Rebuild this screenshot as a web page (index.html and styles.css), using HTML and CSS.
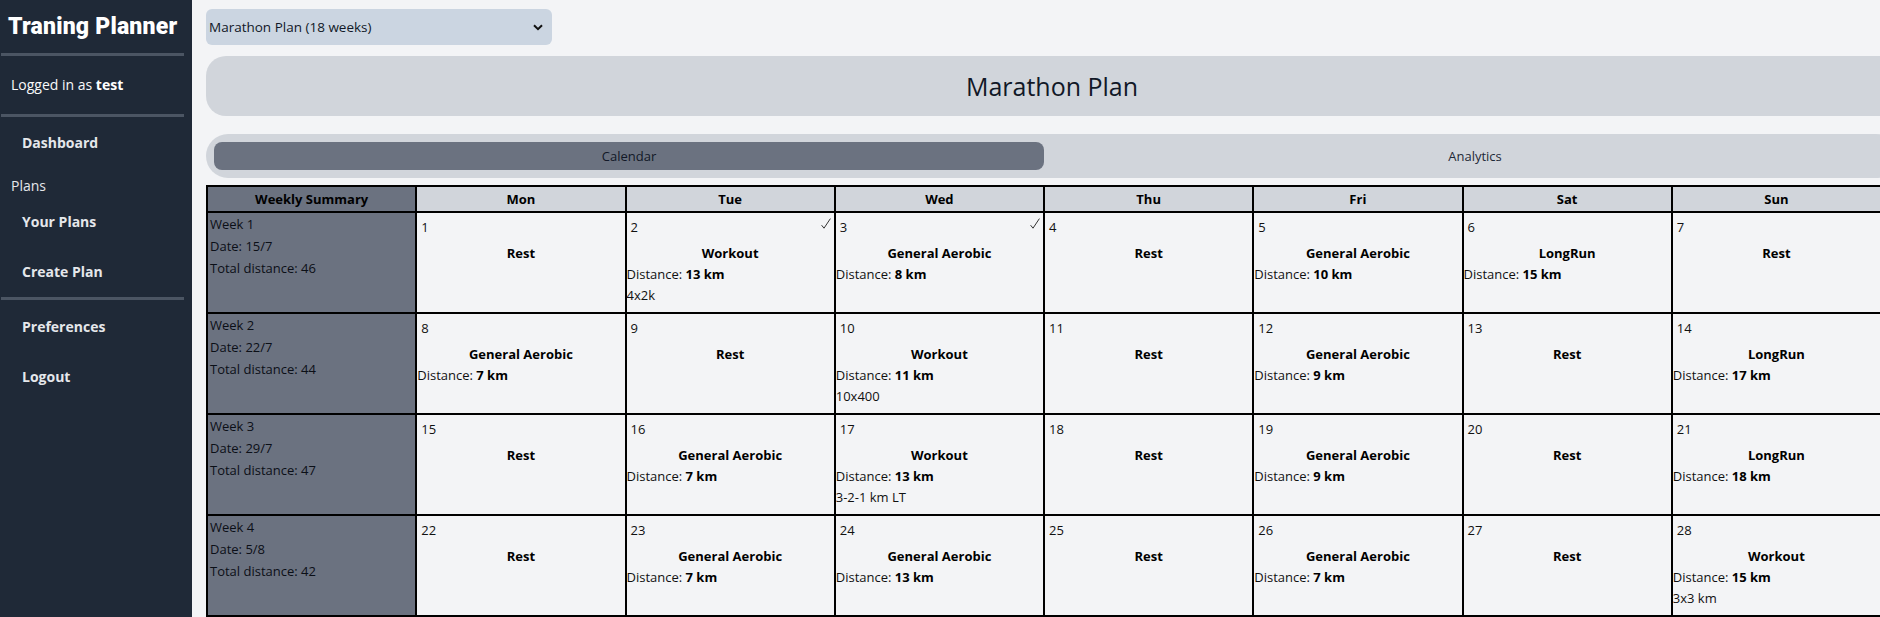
FILE: index.html
```html
<!DOCTYPE html>
<html>
<head>
<meta charset="utf-8">
<title>Traning Planner</title>
<link rel="stylesheet" href="styles.css">
</head>
<body>
<aside class="sidebar">
  <div class="brand">Traning Planner</div>
  <hr class="rule">
  <div class="user">Logged in as <b>test</b></div>
  <hr class="rule rule-b">
  <nav class="nav">
    <a class="nav-link nav-first">Dashboard</a>
    <div class="nav-label">Plans</div>
    <a class="nav-link">Your Plans</a>
    <a class="nav-link">Create Plan</a>
  </nav>
  <hr class="rule">
  <nav class="nav nav-bottom">
    <a class="nav-link">Preferences</a>
    <a class="nav-link">Logout</a>
  </nav>
</aside>

<main class="main">
  <div class="select-wrap">
    <select class="plan-select">
      <option>Marathon Plan (18 weeks)</option>
    </select>
    <svg class="select-arrow" width="10" height="7" viewBox="0 0 10 7"><path d="M1 1.2 L5 5.2 L9 1.2" fill="none" stroke="#111" stroke-width="2"/></svg>
  </div>

  <div class="banner">Marathon Plan</div>

  <div class="tabs">
    <div class="tab tab-active">Calendar</div>
    <div class="tab">Analytics</div>
  </div>

  <table class="cal">
    <thead>
      <tr>
        <th class="th-summary">Weekly Summary</th>
        <th>Mon</th><th>Tue</th><th>Wed</th><th>Thu</th><th>Fri</th><th>Sat</th><th>Sun</th>
      </tr>
    </thead>
    <tbody>
      <tr>
        <td class="summary"><div class="sum-box"><div>Week 1</div><div>Date: 15/7</div><div>Total distance: 46</div></div></td>
        <td><div class="day"><div class="day-head"><span>1</span></div><div class="title">Rest</div></div></td>
        <td><div class="day"><div class="day-head"><span>2</span><svg class="check" width="10" height="11" viewBox="0 0 10 11"><path d="M0.6 7.2 L3 10.2 L9.4 0.6" fill="none" stroke="#333" stroke-width="1"/></svg></div><div class="title">Workout</div><div class="line">Distance: <b>13 km</b></div><div class="line">4x2k</div></div></td>
        <td><div class="day"><div class="day-head"><span>3</span><svg class="check" width="10" height="11" viewBox="0 0 10 11"><path d="M0.6 7.2 L3 10.2 L9.4 0.6" fill="none" stroke="#333" stroke-width="1"/></svg></div><div class="title">General Aerobic</div><div class="line">Distance: <b>8 km</b></div></div></td>
        <td><div class="day"><div class="day-head"><span>4</span></div><div class="title">Rest</div></div></td>
        <td><div class="day"><div class="day-head"><span>5</span></div><div class="title">General Aerobic</div><div class="line">Distance: <b>10 km</b></div></div></td>
        <td><div class="day"><div class="day-head"><span>6</span></div><div class="title">LongRun</div><div class="line">Distance: <b>15 km</b></div></div></td>
        <td><div class="day"><div class="day-head"><span>7</span></div><div class="title">Rest</div></div></td>
      </tr>
      <tr>
        <td class="summary"><div class="sum-box"><div>Week 2</div><div>Date: 22/7</div><div>Total distance: 44</div></div></td>
        <td><div class="day"><div class="day-head"><span>8</span></div><div class="title">General Aerobic</div><div class="line">Distance: <b>7 km</b></div></div></td>
        <td><div class="day"><div class="day-head"><span>9</span></div><div class="title">Rest</div></div></td>
        <td><div class="day"><div class="day-head"><span>10</span></div><div class="title">Workout</div><div class="line">Distance: <b>11 km</b></div><div class="line">10x400</div></div></td>
        <td><div class="day"><div class="day-head"><span>11</span></div><div class="title">Rest</div></div></td>
        <td><div class="day"><div class="day-head"><span>12</span></div><div class="title">General Aerobic</div><div class="line">Distance: <b>9 km</b></div></div></td>
        <td><div class="day"><div class="day-head"><span>13</span></div><div class="title">Rest</div></div></td>
        <td><div class="day"><div class="day-head"><span>14</span></div><div class="title">LongRun</div><div class="line">Distance: <b>17 km</b></div></div></td>
      </tr>
      <tr>
        <td class="summary"><div class="sum-box"><div>Week 3</div><div>Date: 29/7</div><div>Total distance: 47</div></div></td>
        <td><div class="day"><div class="day-head"><span>15</span></div><div class="title">Rest</div></div></td>
        <td><div class="day"><div class="day-head"><span>16</span></div><div class="title">General Aerobic</div><div class="line">Distance: <b>7 km</b></div></div></td>
        <td><div class="day"><div class="day-head"><span>17</span></div><div class="title">Workout</div><div class="line">Distance: <b>13 km</b></div><div class="line">3-2-1 km LT</div></div></td>
        <td><div class="day"><div class="day-head"><span>18</span></div><div class="title">Rest</div></div></td>
        <td><div class="day"><div class="day-head"><span>19</span></div><div class="title">General Aerobic</div><div class="line">Distance: <b>9 km</b></div></div></td>
        <td><div class="day"><div class="day-head"><span>20</span></div><div class="title">Rest</div></div></td>
        <td><div class="day"><div class="day-head"><span>21</span></div><div class="title">LongRun</div><div class="line">Distance: <b>18 km</b></div></div></td>
      </tr>
      <tr>
        <td class="summary"><div class="sum-box"><div>Week 4</div><div>Date: 5/8</div><div>Total distance: 42</div></div></td>
        <td><div class="day"><div class="day-head"><span>22</span></div><div class="title">Rest</div></div></td>
        <td><div class="day"><div class="day-head"><span>23</span></div><div class="title">General Aerobic</div><div class="line">Distance: <b>7 km</b></div></div></td>
        <td><div class="day"><div class="day-head"><span>24</span></div><div class="title">General Aerobic</div><div class="line">Distance: <b>13 km</b></div></div></td>
        <td><div class="day"><div class="day-head"><span>25</span></div><div class="title">Rest</div></div></td>
        <td><div class="day"><div class="day-head"><span>26</span></div><div class="title">General Aerobic</div><div class="line">Distance: <b>7 km</b></div></div></td>
        <td><div class="day"><div class="day-head"><span>27</span></div><div class="title">Rest</div></div></td>
        <td><div class="day"><div class="day-head"><span>28</span></div><div class="title">Workout</div><div class="line">Distance: <b>15 km</b></div><div class="line">3x3 km</div></div></td>
      </tr>
    </tbody>
  </table>
</main>
</body>
</html>
```

FILE: styles.css
```css
html, body {
  margin: 0;
  padding: 0;
}
body {
  display: flex;
  align-items: stretch;
  min-height: 617px;
  height: 617px;
  overflow: hidden;
  background: #f3f4f6;
  font-family: "Open Sans", "Noto Sans", sans-serif;
  color: #111827;
}

/* Sidebar */
.sidebar {
  width: 192px;
  flex-shrink: 0;
  background: #1f2937;
  color: #f3f4f6;
  display: flex;
  flex-direction: column;
}
.brand {
  font-family: Roboto, "Open Sans", sans-serif;
  font-weight: 900;
  font-size: 23px;
  line-height: 30px;
  letter-spacing: 0.2px;
  color: #ffffff;
  padding: 12px 0 0 8px;
  box-sizing: border-box;
  height: 53px;
  white-space: nowrap;
}
.rule {
  border: 0;
  height: 3px;
  background: #4b5563;
  margin: 0 8px 0 1px;
}
.user {
  font-size: 14px;
  line-height: 20px;
  padding: 19px 0 19px 11px;
  color: #f9fafb;
}
.user b {
  font-weight: 700;
  color: #ffffff;
}
.nav {
  display: flex;
  flex-direction: column;
  padding-top: 1px;
}
.nav-bottom {
  padding-top: 2px;
}
.nav-link {
  display: block;
  font-size: 14px;
  font-weight: 700;
  line-height: 22px;
  padding: 14px 0 14px 22px;
  color: #e5e7eb;
}
.nav-label {
  font-size: 14px;
  line-height: 20px;
  padding: 8px 0 1px 11px;
  color: #e5e7eb;
}

/* Main */
.main {
  width: 1692px;
  flex-shrink: 0;
  padding: 9px 0 0 14px;
  display: flex;
  flex-direction: column;
}
.select-wrap {
  position: relative;
  width: 346px;
  height: 36px;
}
.plan-select {
  appearance: none;
  -webkit-appearance: none;
  width: 346px;
  height: 36px;
  border: 0;
  border-radius: 6px;
  background: #cbd5e1;
  font-family: "Open Sans", sans-serif;
  font-size: 13.5px;
  color: #111827;
  padding: 0 0 0 3px;
  margin: 0;
  outline: none;
}
.select-arrow {
  position: absolute;
  right: 9px;
  top: 15px;
}
.banner {
  margin-top: 11px;
  height: 61px;
  border-radius: 20px;
  background: #d1d5db;
  display: flex;
  align-items: center;
  justify-content: center;
  font-size: 25px;
  font-weight: 400;
  color: #111827;
}
.tabs {
  margin-top: 18px;
  height: 44px;
  box-sizing: border-box;
  padding: 8px;
  background: #d1d5db;
  border-radius: 22px;
  display: flex;
  gap: 16px;
}
.tab {
  flex: 1;
  border-radius: 8px;
  display: flex;
  align-items: center;
  justify-content: center;
  font-size: 13px;
  color: #1f2937;
}
.tab-active {
  background: #6b7280;
  color: #111827;
}

/* Calendar table */
.cal {
  margin-top: 7px;
  width: 1676px;
  table-layout: fixed;
  border-collapse: collapse;
  border: 2px solid #000;
  font-size: 13px;
}
.cal th {
  border: 2px solid #000;
  background: #d1d5db;
  font-weight: 700;
  line-height: 24px;
  padding: 0;
  color: #000;
}
.cal th.th-summary {
  background: #6b7280;
}
.cal td {
  border: 2px solid #000;
  padding: 0;
  vertical-align: top;
  background: #f3f4f6;
}
.cal td.summary {
  background: #6b7280;
}
.sum-box {
  height: 99px;
  padding: 0 2px;
  line-height: 22px;
  color: #0b0f17;
}
.day {
  height: 99px;
  color: #111;
}
.day-head {
  display: flex;
  justify-content: space-between;
  align-items: flex-start;
  padding: 4px 3px 0 4px;
  height: 25px;
  box-sizing: border-box;
  line-height: 21px;
}
.check {
  margin-top: 1px;
}
.title {
  margin-top: 5px;
  text-align: center;
  font-weight: 700;
  line-height: 21px;
  color: #000;
}
.line {
  line-height: 21px;
}
.line b {
  font-weight: 700;
  color: #000;
}
```
